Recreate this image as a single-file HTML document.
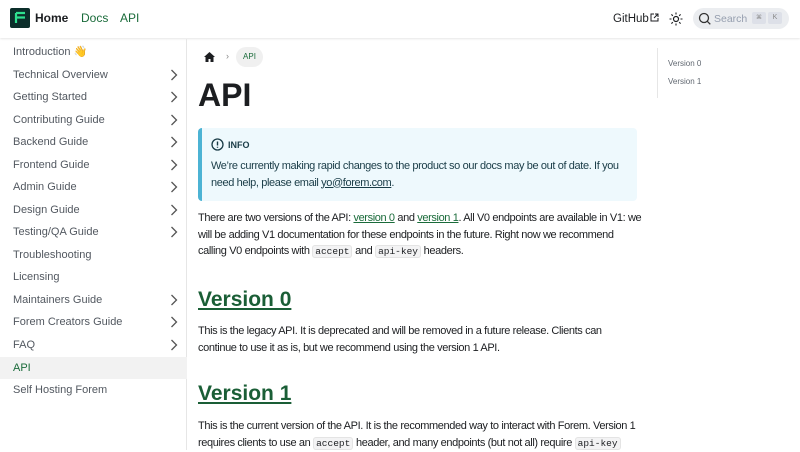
<!DOCTYPE html>
<html><head><meta charset="utf-8"><style>
*{box-sizing:border-box;margin:0;padding:0}
body{width:800px;height:450px;overflow:hidden;font-family:"Liberation Sans",sans-serif;color:#1c1e21;background:#fff;position:relative}
.nav{position:absolute;left:0;top:0;width:800px;height:38px;box-shadow:0 1px 2px rgba(0,0,0,.1);background:#fff}
.logo{position:absolute;left:10px;top:8px;width:20px;height:20px;background:#0b2e2a;border-radius:2px}
.nav span{position:absolute;top:11px;font-size:12px;font-weight:bold;line-height:14px}
.side{position:absolute;left:0;top:39px;width:187px;height:411px;border-right:1px solid #e6e6e6}
.si{position:absolute;left:0;width:187px;height:22px;font-size:11px;color:#525860;padding-left:13px;line-height:22px}
.si svg{position:absolute;right:9px;top:5px}
.main{position:absolute;left:198px;width:440px;font-size:11px;line-height:16.5px;color:#1c1e21;white-space:nowrap;letter-spacing:-0.38px}
a{color:#1a6b3a;text-decoration:underline}
code{font-family:"Liberation Mono",monospace;font-size:9.5px;background:#f3f3f4;border:1px solid #e4e4e4;border-radius:3px;padding:0 2px;letter-spacing:0}
h2{font-size:21px;color:#1a5e36;text-decoration:underline;font-weight:bold;letter-spacing:0}
</style></head><body>
<div class="nav">
<div class="logo"><svg width="20" height="20"><path d="M6 5h9M6 9.5h9M6 5v10" stroke="#2ee08f" stroke-width="2.2" fill="none"/></svg></div>
<span style="left:35px;color:#1c1e21">Home</span>
<span style="left:81px;color:#1a6b3a;font-weight:normal">Docs</span>
<span style="left:120px;color:#1a6b3a;font-weight:normal">API</span>
<span style="left:613px;top:12px;font-weight:normal;color:#1c1e21;font-size:11.5px">GitHub</span>
<svg style="position:absolute;left:650px;top:13px" width="9" height="9"><path d="M4 1H1v7h7V5M5 1h3v3M8 1L4 5" stroke="#1c1e21" stroke-width="1" fill="none"/></svg>
<svg style="position:absolute;left:669px;top:12px" width="14" height="14"><circle cx="7" cy="7" r="2.5" stroke="#1c1e21" stroke-width="1.2" fill="none"/><path d="M7 0.5v2M7 11.5v2M0.5 7h2M11.5 7h2M2.4 2.4l1.4 1.4M10.2 10.2l1.4 1.4M2.4 11.6l1.4-1.4M10.2 3.8l1.4-1.4" stroke="#1c1e21" stroke-width="1.1"/></svg>
<div style="position:absolute;left:693px;top:8px;width:96px;height:21px;border-radius:11px;background:#ebedf0"></div>
<svg style="position:absolute;left:698px;top:12px" width="13" height="13"><circle cx="6" cy="6" r="4.5" stroke="#333" stroke-width="1.3" fill="none"/><path d="M9.3 9.3l3 3" stroke="#333" stroke-width="1.3"/></svg>
<span style="left:714px;top:12px;font-weight:normal;color:#969faf;font-size:10.5px">Search</span>
<div style="position:absolute;left:752px;top:12px;width:14px;height:12px;border-radius:2px;background:#dde0e8;font-size:6px;color:#888;text-align:center;line-height:12px">⌘</div>
<div style="position:absolute;left:768px;top:12px;width:14px;height:12px;border-radius:2px;background:#dde0e8;font-size:7px;color:#888;text-align:center;line-height:12px">K</div>
</div>
<div class="side">
<div class="si" style="top:2px">Introduction 👋</div>
<div class="si" style="top:25px">Technical Overview<svg width="8" height="12"><path d="M1.5 1l5 5-5 5" stroke="#555" stroke-width="1.3" fill="none"/></svg></div>
<div class="si" style="top:47px">Getting Started<svg width="8" height="12"><path d="M1.5 1l5 5-5 5" stroke="#555" stroke-width="1.3" fill="none"/></svg></div>
<div class="si" style="top:70px">Contributing Guide<svg width="8" height="12"><path d="M1.5 1l5 5-5 5" stroke="#555" stroke-width="1.3" fill="none"/></svg></div>
<div class="si" style="top:92px">Backend Guide<svg width="8" height="12"><path d="M1.5 1l5 5-5 5" stroke="#555" stroke-width="1.3" fill="none"/></svg></div>
<div class="si" style="top:115px">Frontend Guide<svg width="8" height="12"><path d="M1.5 1l5 5-5 5" stroke="#555" stroke-width="1.3" fill="none"/></svg></div>
<div class="si" style="top:137px">Admin Guide<svg width="8" height="12"><path d="M1.5 1l5 5-5 5" stroke="#555" stroke-width="1.3" fill="none"/></svg></div>
<div class="si" style="top:160px">Design Guide<svg width="8" height="12"><path d="M1.5 1l5 5-5 5" stroke="#555" stroke-width="1.3" fill="none"/></svg></div>
<div class="si" style="top:182px">Testing/QA Guide<svg width="8" height="12"><path d="M1.5 1l5 5-5 5" stroke="#555" stroke-width="1.3" fill="none"/></svg></div>
<div class="si" style="top:205px">Troubleshooting</div>
<div class="si" style="top:227px">Licensing</div>
<div class="si" style="top:250px">Maintainers Guide<svg width="8" height="12"><path d="M1.5 1l5 5-5 5" stroke="#555" stroke-width="1.3" fill="none"/></svg></div>
<div class="si" style="top:272px">Forem Creators Guide<svg width="8" height="12"><path d="M1.5 1l5 5-5 5" stroke="#555" stroke-width="1.3" fill="none"/></svg></div>
<div class="si" style="top:295px">FAQ<svg width="8" height="12"><path d="M1.5 1l5 5-5 5" stroke="#555" stroke-width="1.3" fill="none"/></svg></div>
<div class="si" style="top:318px;background:#f2f2f2;color:#1a6b3a">API</div>
<div class="si" style="top:340px">Self Hosting Forem</div>
</div>
<svg style="position:absolute;left:204px;top:52px" width="11" height="10"><path d="M5.5 0L0 5h1.5v5h3V7h2v3h3V5H11z" fill="#1c1e21"/></svg>
<div style="position:absolute;left:226px;top:51px;font-size:9px;color:#888">›</div>
<div style="position:absolute;left:236px;top:47px;width:27px;height:20px;border-radius:10px;background:#f0f0f0;color:#1a6b3a;font-size:8px;text-align:center;line-height:20px">API</div>
<div class="main" style="top:75px;font-size:32px;line-height:40px;font-weight:bold;letter-spacing:0">API</div>
<div style="position:absolute;left:198px;top:128px;width:439px;height:73px;background:#eef9fd;border-left:4px solid #4cb3d4;border-radius:4px"></div>
<svg style="position:absolute;left:211px;top:138px" width="13" height="13"><circle cx="6.5" cy="6.5" r="5.5" stroke="#193c47" stroke-width="1.3" fill="none"/><path d="M6.5 3.5v4M6.5 8.8v1" stroke="#193c47" stroke-width="1.4"/></svg>
<div class="main" style="left:228px;top:139px;font-size:9px;font-weight:bold;line-height:13px;color:#193c47;letter-spacing:0">INFO</div>
<div class="main" style="left:211px;top:158px;width:420px;color:#193c47">We’re currently making rapid changes to the product so our docs may be out of date. If you<br>need help, please email <a style="color:#193c47">yo@forem.com</a>.</div>
<div class="main" style="top:210px">There are two versions of the API: <a>version 0</a> and <a>version 1</a>. All V0 endpoints are available in V1: we<br>will be adding V1 documentation for these endpoints in the future. Right now we recommend<br>calling V0 endpoints with <code>accept</code> and <code>api-key</code> headers.</div>
<div class="main" style="top:287px;line-height:26px"><h2>Version 0</h2></div>
<div class="main" style="top:323px">This is the legacy API. It is deprecated and will be removed in a future release. Clients can<br>continue to use it as is, but we recommend using the version 1 API.</div>
<div class="main" style="top:381px;line-height:26px"><h2>Version 1</h2></div>
<div class="main" style="top:418px">This is the current version of the API. It is the recommended way to interact with Forem. Version 1<br>requires clients to use an <code>accept</code> header, and many endpoints (but not all) require <code>api-key</code></div>
<div style="position:absolute;left:657px;top:48px;height:50px;border-left:1px solid #e6e6e6"></div>
<div style="position:absolute;left:668px;top:59px;font-size:8px;color:#606770">Version 0</div>
<div style="position:absolute;left:668px;top:77px;font-size:8px;color:#606770">Version 1</div>
</body></html>
